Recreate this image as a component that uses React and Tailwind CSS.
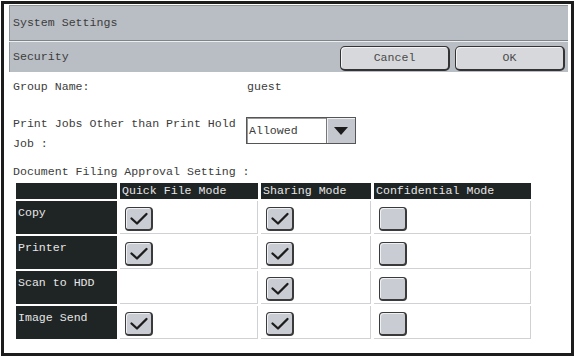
import React from 'react';

const ROWS = [
  { name: 'Copy', quick: true, sharing: true, confidential: false },
  { name: 'Printer', quick: true, sharing: true, confidential: false },
  { name: 'Scan to HDD', quick: null, sharing: true, confidential: false },
  { name: 'Image Send', quick: true, sharing: true, confidential: false },
];

function CheckBox({ checked }) {
  return (
    <div className="flex h-[24px] w-[28px] items-center justify-center rounded-[4px] border border-b-2 border-r-2 border-[#3a3a3a] bg-[#c9ccd2] shadow-[inset_1px_1px_0_#eef0f2]">
      {checked && (
        <svg width="20" height="14" viewBox="0 0 20 14">
          <path d="M2.5 6.5 L8 11.5 L17.5 2" fill="none" stroke="#1c1c1c" strokeWidth="2.3" strokeLinecap="round" strokeLinejoin="round" />
        </svg>
      )}
    </div>
  );
}

function Cell({ value, width }) {
  return (
    <div className={`${width} h-full border-b border-r border-[#cfd1d4] bg-white pl-[5px] pt-[6px]`}>
      {value !== null && <CheckBox checked={value} />}
    </div>
  );
}

function Button({ children }) {
  return (
    <button className="flex h-[25px] w-[110px] items-center justify-center rounded-[5px] border border-b-2 border-r-2 border-[#333] bg-[#d6d8dc] text-[#4a4a4a] shadow-[inset_1px_1px_0_#f2f3f4]">
      {children}
    </button>
  );
}

export default function App() {
  return (
    <div
      className="h-[357px] w-[576px] bg-white p-[1px] text-[11.6px] leading-[20px] text-[#3c3c3c]"
      style={{ fontFamily: '"Liberation Mono", "Courier New", monospace' }}
    >
      <div className="flex h-[355px] w-[573px] flex-col border-[3px] border-[#1c1c1c] pl-[5px] pr-[3px] pt-[1px]">
        <div className="flex h-[35px] items-center border-l border-t border-[#8f939a] bg-[#b9bdc4] pl-[3px]">
          System Settings
        </div>
        <div className="h-[2px] border-t border-[#7f848b] bg-[#eceef0]" />
        <div className="flex h-[30px] items-center border-l border-[#8f939a] bg-[#b9bdc4] pl-[3px]">
          <span className="flex-1">Security</span>
          <div className="flex gap-[5px] pr-[3px] pt-[2px]">
            <Button>Cancel</Button>
            <Button>OK</Button>
          </div>
        </div>

        <div className="flex flex-col pl-[4px]">
          <div className="flex h-[30px] items-center">
            <span className="w-[234px]">Group Name:</span>
            <span>guest</span>
          </div>

          <div className="mt-[12px] flex">
            <span className="w-[233px]">
              Print Jobs Other than Print Hold
              <br />
              Job :
            </span>
            <div className="mt-[3px] flex h-[27px] w-[110px] border border-[#555] bg-white shadow-[inset_1px_1px_0_#999]">
              <span className="flex flex-1 items-center pl-[2px]">Allowed</span>
              <div className="flex w-[29px] items-center justify-center border-l border-[#777] bg-[#c4c8ce] shadow-[inset_1px_1px_0_#eef0f2]">
                <svg width="14" height="8" viewBox="0 0 14 8">
                  <path d="M0 0 H14 L7 8 Z" fill="#1c1c1c" />
                </svg>
              </div>
            </div>
          </div>

          <div className="mt-[8px]">Document Filing Approval Setting :</div>

          <div className="ml-[3px] mt-[1px] flex flex-col gap-[2px]">
            <div className="flex h-[16px] gap-[3px] text-[#e6e6e6]">
              <div className="w-[101px] bg-[#1f2424]" />
              <div className="flex w-[138px] items-center bg-[#1f2424] pl-[2px]">Quick File Mode</div>
              <div className="flex w-[110px] items-center bg-[#1f2424] pl-[2px]">Sharing Mode</div>
              <div className="flex w-[157px] items-center bg-[#1f2424] pl-[2px]">Confidential Mode</div>
            </div>
            {ROWS.map((row) => (
              <div key={row.name} className="flex h-[33px] gap-[3px]">
                <div className="w-[101px] bg-[#1f2424] pl-[2px] pt-[2px] text-[#e6e6e6]">{row.name}</div>
                <Cell value={row.quick} width="w-[138px]" />
                <Cell value={row.sharing} width="w-[110px]" />
                <Cell value={row.confidential} width="w-[157px]" />
              </div>
            ))}
          </div>
        </div>
      </div>
    </div>
  );
}
